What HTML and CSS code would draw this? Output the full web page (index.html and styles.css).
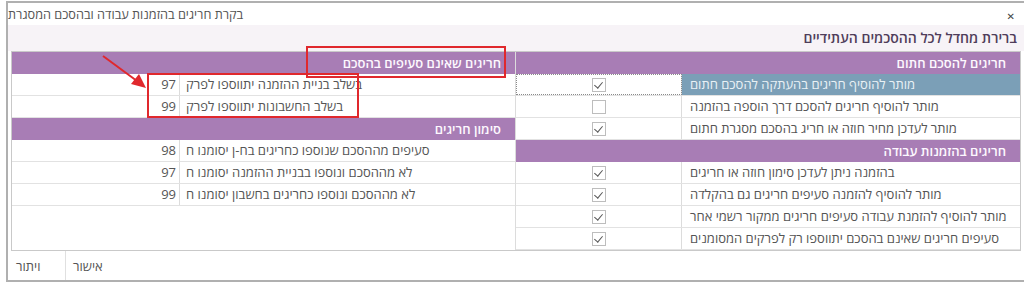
FILE: index.html
```html
<!DOCTYPE html>
<html lang="he" dir="rtl">
<head>
    <meta charset="UTF-8">
    <title>בקרת חריגים</title>
    <link rel="stylesheet" href="styles.css">
</head>
<body>
    <div class="dialog">
        <div class="titlebar">
            <span class="close">&#x2715;</span>
            <span class="title">בקרת חריגים בהזמנות עבודה ובהסכם המסגרת</span>
        </div>
        <div class="subtitle">ברירת מחדל לכל ההסכמים העתידיים</div>

        <div class="panel">
            <!-- right side: checkbox settings -->
            <div class="grid grid-right">
                <div class="group-head">חריגים להסכם חתום</div>
                <div class="row selected">
                    <div class="label">מותר להוסיף חריגים בהעתקה להסכם חתום</div>
                    <div class="check focus"><span class="box on"></span></div>
                </div>
                <div class="row">
                    <div class="label">מותר להוסיף חריגים להסכם דרך הוספה בהזמנה</div>
                    <div class="check"><span class="box"></span></div>
                </div>
                <div class="row">
                    <div class="label">מותר לעדכן מחיר חוזה או חריג בהסכם מסגרת חתום</div>
                    <div class="check"><span class="box on"></span></div>
                </div>
                <div class="group-head">חריגים בהזמנות עבודה</div>
                <div class="row">
                    <div class="label">בהזמנה ניתן לעדכן סימון חוזה או חריגים</div>
                    <div class="check"><span class="box on"></span></div>
                </div>
                <div class="row">
                    <div class="label">מותר להוסיף להזמנה סעיפים חריגים גם בהקלדה</div>
                    <div class="check"><span class="box on"></span></div>
                </div>
                <div class="row">
                    <div class="label">מותר להוסיף להזמנת עבודה סעיפים חריגים ממקור רשמי אחר</div>
                    <div class="check"><span class="box on"></span></div>
                </div>
                <div class="row">
                    <div class="label">סעיפים חריגים שאינם בהסכם יתווספו רק לפרקים המסומנים</div>
                    <div class="check"><span class="box on"></span></div>
                </div>
            </div>

            <!-- left side: chapter numbers -->
            <div class="grid grid-left">
                <div class="group-head">חריגים שאינם סעיפים בהסכם</div>
                <div class="row">
                    <div class="text">בשלב בניית ההזמנה יתווספו לפרק</div>
                    <div class="num">97</div>
                </div>
                <div class="row">
                    <div class="text">בשלב החשבונות יתווספו לפרק</div>
                    <div class="num">99</div>
                </div>
                <div class="group-head">סימון חריגים</div>
                <div class="row">
                    <div class="text">סעיפים מההסכם שנוספו כחריגים בח-ן יסומנו ח</div>
                    <div class="num">98</div>
                </div>
                <div class="row">
                    <div class="text">לא מההסכם ונוספו בבניית ההזמנה יסומנו ח</div>
                    <div class="num">97</div>
                </div>
                <div class="row">
                    <div class="text">לא מההסכם ונוספו כחריגים בחשבון יסומנו ח</div>
                    <div class="num">99</div>
                </div>
            </div>
        </div>

        <div class="footer">
            <span class="btn btn-ok">אישור</span>
            <span class="btn btn-cancel">ויתור</span>
        </div>
    </div>

    <!-- red markup drawn over the screenshot -->
    <svg class="markup" width="1024" height="283" viewBox="0 0 1024 283">
        <rect x="307" y="47" width="198" height="30" fill="none" stroke="#e0282d" stroke-width="2"/>
        <rect x="148" y="74" width="210" height="43" fill="none" stroke="#e0282d" stroke-width="2"/>
        <line x1="103" y1="56" x2="137" y2="81" stroke="#e0282d" stroke-width="2"/>
        <polygon points="146,88 131,84 139,74" fill="#e0282d"/>
    </svg>
</body>
</html>
```

FILE: styles.css
```css
body {
    margin: 0;
    width: 1024px;
    height: 283px;
    overflow: hidden;
    position: relative;
    background-color: #fff;
    font-family: "Open Sans", "Liberation Sans", "DejaVu Sans", sans-serif;
    font-size: 13px;
    color: #555;
}

.dialog {
    margin: 1px 0 0 2px;
    width: 1018px;
    height: 281px;
    box-sizing: border-box;
    border-top: 2px solid #b0b0b0;
    border-left: 2px solid #b0b0b0;
    border-bottom: 2px solid #b0b0b0;
    display: flex;
    flex-direction: column;
}

.titlebar {
    height: 22px;
    display: flex;
    justify-content: space-between;
    align-items: center;
}

.title {
    color: #555;
    font-size: 12.7px;
}

.close {
    font-size: 10px;
    color: #444;
    padding-right: 9px;
    padding-top: 3px;
}

.subtitle {
    height: 26px;
    line-height: 25px;
    background-color: #f7f3f7;
    padding-right: 7px;
    color: #4f3d5a;
    font-weight: 600;
    font-size: 14px;
}

.panel {
    margin: 0 3px;
    height: 200px;
    box-sizing: border-box;
    border: 1px solid #c9c9c9;
    display: flex;
}

.grid {
    display: flex;
    flex-direction: column;
    min-width: 0;
}

.grid-right {
    flex: 0 0 504px;
    border-left: 1px solid #dcdcdc;
}

.grid-left {
    flex: 1;
}

.group-head {
    height: 22px;
    line-height: 22px;
    background-color: #a87db5;
    color: #fdf8fe;
    font-weight: 600;
    padding-right: 14px;
}

.row {
    height: 22px;
    box-sizing: border-box;
    border-bottom: 1px solid #e2e2e2;
    display: flex;
}

.label {
    flex: 1;
    min-width: 0;
    line-height: 21px;
    text-align: left;
    padding-left: 8px;
    white-space: nowrap;
}

.row.selected .label {
    background-color: #7b9fb7;
    color: #e9f1f5;
}

.check {
    flex: 0 0 165px;
    border-right: 1px solid #dcdcdc;
    display: flex;
    align-items: center;
    justify-content: center;
}

.check.focus {
    outline: 1px dotted #8a8a8a;
    outline-offset: -1px;
}

.box {
    width: 12px;
    height: 12px;
    border: 1px solid #bdbdbd;
    background-color: #fff;
    position: relative;
}

.box.on::after {
    content: "";
    position: absolute;
    left: 3px;
    top: 1px;
    width: 4px;
    height: 7px;
    border-right: 1.5px solid #555;
    border-bottom: 1.5px solid #555;
    transform: rotate(40deg);
}

.text {
    flex: 1;
    min-width: 0;
    line-height: 21px;
    text-align: left;
    padding-left: 6px;
    white-space: nowrap;
}

.num {
    flex: 0 0 164px;
    line-height: 21px;
    text-align: right;
    padding-right: 3px;
    border-right: 1px solid #dcdcdc;
}

.footer {
    flex: 1;
    display: flex;
    justify-content: flex-end;
}

.btn {
    display: flex;
    align-items: center;
    justify-content: flex-end;
    box-sizing: border-box;
    color: #555;
}

.btn-ok {
    padding-left: 7px;
    width: 60px;
}

.btn-cancel {
    width: 58px;
    padding-left: 8px;
    border-right: 1px solid #e0e0e0;
}

.markup {
    position: absolute;
    top: 0;
    left: 0;
    pointer-events: none;
}
```
